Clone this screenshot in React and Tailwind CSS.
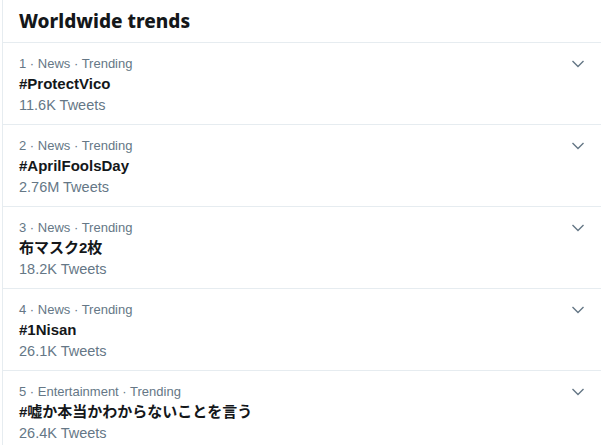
import React from "react";

const trends = [
  { n: 1, cat: "News", name: "#ProtectVico", count: "11.6K Tweets" },
  { n: 2, cat: "News", name: "#AprilFoolsDay", count: "2.76M Tweets" },
  { n: 3, cat: "News", name: "布マスク2枚", count: "18.2K Tweets" },
  { n: 4, cat: "News", name: "#1Nisan", count: "26.1K Tweets" },
  { n: 5, cat: "Entertainment", name: "#嘘か本当かわからないことを言う", count: "26.4K Tweets" },
];

function Chevron() {
  return (
    <svg width="14" height="10" viewBox="0 0 14 10" className="text-[#657786]">
      <path d="M1.5 2 L7 7.5 L12.5 2" fill="none" stroke="currentColor" strokeWidth="1.4" />
    </svg>
  );
}

export default function App() {
  return (
    <div
      className="w-[601px] h-[445px] overflow-hidden bg-white"
      style={{ fontFamily: '"Liberation Sans", "Noto Sans CJK JP", sans-serif' }}
    >
      <div className="ml-[2px] border-l border-[#e6ecf0] h-full">
        <div className="h-[43px] flex items-center px-[16px] border-b border-[#e6ecf0]">
          <h2
            className="text-[19px] font-extrabold text-[#14171a] leading-none mt-[1px]"
            style={{ fontFamily: '"Noto Sans", sans-serif' }}
          >
            Worldwide trends
          </h2>
        </div>
        {trends.map((t) => (
          <div key={t.n} className="h-[82px] border-b border-[#e6ecf0] pl-[16px] pt-[11px] flex">
            <div className="flex-1">
              <div className="text-[13px] leading-[20px] text-[#657786]">
                {t.n} · {t.cat} · Trending
              </div>
              <div className="text-[15px] leading-[20px] font-bold text-[#14171a]">{t.name}</div>
              <div className="text-[14.5px] leading-[22px] text-[#657786]">{t.count}</div>
            </div>
            <div className="pr-[16px] pt-[5px]">
              <Chevron />
            </div>
          </div>
        ))}
      </div>
    </div>
  );
}
